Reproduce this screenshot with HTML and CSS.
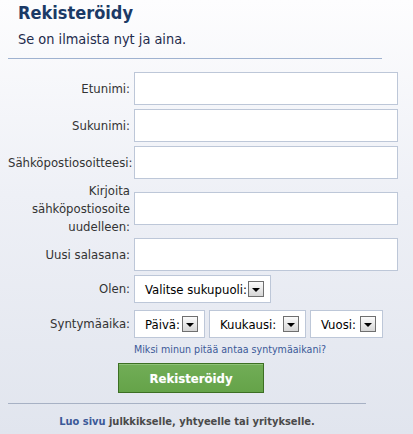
FILE: index.html
```html
<!DOCTYPE html>
<html lang="fi">
<head>
<meta charset="utf-8">
<title>Rekisteröidy</title>
<link rel="stylesheet" href="styles.css">
</head>
<body>
<div class="page">
  <header class="head">
    <h1 class="title">Rekisteröidy</h1>
    <p class="subtitle">Se on ilmaista nyt ja aina.</p>
  </header>
  <hr class="rule">
  <form class="form">
    <label class="lbl">Etunimi:</label><input class="field" type="text">
    <label class="lbl">Sukunimi:</label><input class="field" type="text">
    <label class="lbl">Sähköpostiosoitteesi:</label><input class="field" type="text">
    <label class="lbl lbl-multi">Kirjoita sähköpostiosoite uudelleen:</label><input class="field" type="text">
    <label class="lbl">Uusi salasana:</label><input class="field" type="password">
    <label class="lbl">Olen:</label>
    <div class="selrow">
      <span class="sel sel-gender">Valitse sukupuoli:<span class="arrow"></span></span>
    </div>
    <label class="lbl birth">Syntymäaika:</label>
    <div class="selrow birth">
      <span class="sel sel-day">Päivä:<span class="arrow"></span></span>
      <span class="sel sel-month">Kuukausi:<span class="arrow"></span></span>
      <span class="sel sel-year">Vuosi:<span class="arrow"></span></span>
    </div>
    <a class="why" href="#">Miksi minun pitää antaa syntymäaikani?</a>
  </form>
  <div class="actions"><button class="btn" type="button">Rekisteröidy</button></div>
  <hr class="rule rule-short">
  <p class="footer"><a class="footer-link" href="#">Luo sivu</a> julkkikselle, yhtyeelle tai yritykselle.</p>
</div>
</body>
</html>
```
FILE: styles.css
```css
html, body {
  margin: 0;
  padding: 0;
}
body {
  min-height: 434px;
  background: linear-gradient(to bottom, #fdfdfe 0%, #eef0f6 45%, #e1e5ee 100%);
  font-family: "DejaVu Sans Condensed", "DejaVu Sans", sans-serif;
  font-stretch: condensed;
  color: #333;
}
.page {
  padding: 0 8px;
}
.head {
  padding: 2px 0 0 10px;
}
.title {
  margin: 0;
  font-size: 18px;
  line-height: 22px;
  font-weight: bold;
  color: #1b3a66;
}
.subtitle {
  margin: 6px 0 0;
  font-size: 14.4px;
  line-height: 18px;
  color: #1e2b4c;
}
.rule {
  margin: 10px 0 0;
  width: 374px;
  height: 0;
  border: 0;
  border-top: 1px solid #9fb2d0;
}
.form {
  display: grid;
  grid-template-columns: 122px auto;
  column-gap: 4px;
  row-gap: 4px;
  align-items: center;
  margin-top: 13px;
}
.lbl {
  text-align: right;
  font-size: 13px;
  line-height: 18px;
  color: #333;
}
.lbl-multi {
  margin: -1px 0 -2px;
}
.field {
  width: 264px;
  height: 33px;
  box-sizing: border-box;
  margin: 0;
  padding: 3px;
  border: 1px solid #bdc7d8;
  background: #fff;
}
.selrow {
  display: flex;
  gap: 4px;
}
.birth {
  margin-top: 3px;
}
.sel {
  display: flex;
  align-items: center;
  justify-content: space-between;
  height: 28px;
  box-sizing: border-box;
  padding: 0 6px 0 10px;
  border: 1px solid #bdc7d8;
  background: #fff;
  font-size: 13px;
  color: #000;
}
.sel-gender { width: 137px; }
.sel-day { width: 71px; }
.sel-month { width: 97px; }
.sel-year { width: 73px; }
.arrow {
  display: flex;
  align-items: center;
  justify-content: center;
  width: 16px;
  height: 16px;
  box-sizing: border-box;
  border: 1px solid #6f6f6f;
  background: linear-gradient(to bottom, #fbfbfb, #d6d6d6);
}
.arrow::after {
  content: "";
  margin-top: 1px;
  border-left: 4px solid transparent;
  border-right: 4px solid transparent;
  border-top: 4px solid #000;
}
.why {
  grid-column: 2;
  font-size: 10.6px;
  line-height: 14px;
  color: #3b5998;
  text-decoration: none;
}
.actions {
  margin-top: 7px;
  padding-left: 110px;
}
.btn {
  width: 146px;
  height: 30px;
  margin: 0;
  padding: 0;
  border: 1px solid #3c6f23;
  background: linear-gradient(to bottom, #71ad57, #65a349);
  box-shadow: inset 0 1px 0 #8fc278;
  color: #fff;
  font-family: inherit;
  font-stretch: condensed;
  font-size: 13px;
  font-weight: bold;
  text-shadow: 0 0 1px rgba(255, 255, 255, 0.3);
}
.rule-short {
  width: 358px;
  margin-top: 10px;
  border-top-color: #a7b1c4;
}
.footer {
  width: 358px;
  margin: 11px 0 0;
  text-align: center;
  font-size: 11px;
  line-height: 14px;
  font-weight: bold;
  color: #4a4a4a;
}
.footer-link {
  color: #3b5998;
  text-decoration: none;
}
```
